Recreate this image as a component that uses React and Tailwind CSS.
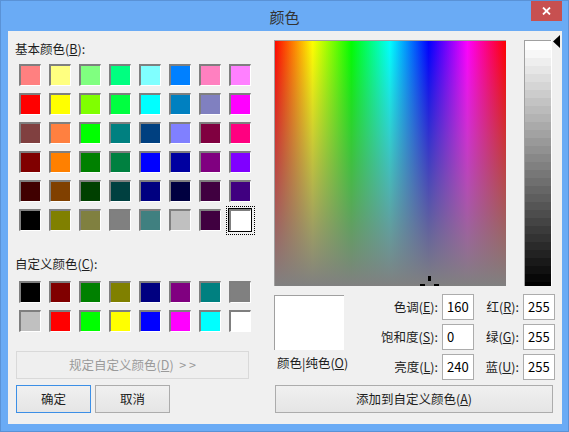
import React from "react"

const font = "font-['Noto_Sans_CJK_SC','Noto_Sans',sans-serif]"

const basicColors = [
  ["bg-[#ff8080]", "bg-[#ffff80]", "bg-[#80ff80]", "bg-[#00ff80]", "bg-[#80ffff]", "bg-[#0080ff]", "bg-[#ff80c0]", "bg-[#ff80ff]"],
  ["bg-[#ff0000]", "bg-[#ffff00]", "bg-[#80ff00]", "bg-[#00ff40]", "bg-[#00ffff]", "bg-[#0080c0]", "bg-[#8080c0]", "bg-[#ff00ff]"],
  ["bg-[#804040]", "bg-[#ff8040]", "bg-[#00ff00]", "bg-[#008080]", "bg-[#004080]", "bg-[#8080ff]", "bg-[#800040]", "bg-[#ff0080]"],
  ["bg-[#800000]", "bg-[#ff8000]", "bg-[#008000]", "bg-[#008040]", "bg-[#0000ff]", "bg-[#0000a0]", "bg-[#800080]", "bg-[#8000ff]"],
  ["bg-[#400000]", "bg-[#804000]", "bg-[#004000]", "bg-[#004040]", "bg-[#000080]", "bg-[#000040]", "bg-[#400040]", "bg-[#400080]"],
  ["bg-[#000000]", "bg-[#808000]", "bg-[#808040]", "bg-[#808080]", "bg-[#408080]", "bg-[#c0c0c0]", "bg-[#400040]", "bg-[#ffffff]"],
].flat()

const customColors = [
  "bg-[#000000]", "bg-[#800000]", "bg-[#008000]", "bg-[#808000]", "bg-[#000080]", "bg-[#800080]", "bg-[#008080]", "bg-[#808080]",
  "bg-[#c0c0c0]", "bg-[#ff0000]", "bg-[#00ff00]", "bg-[#ffff00]", "bg-[#0000ff]", "bg-[#ff00ff]", "bg-[#00ffff]", "bg-[#ffffff]",
]

// sunken little colour box
const Swatch = ({ color, selected }) => (
  <div className="relative w-[22px] h-[22px]">
    <div className={`w-full h-full border-t-2 border-l-2 border-r border-b border-t-[#7f7f7f] border-l-[#7f7f7f] border-r-white border-b-white ${color}`} />
    {selected && (
      <>
        <div className="absolute -inset-[1px] border border-black" />
        <div className="absolute -top-[3px] -left-[3px] -right-[4px] -bottom-[4px] border border-dotted border-black" />
      </>
    )}
  </div>
)

const Spectrum = () => (
  <svg width="232" height="246" className="block">
    <defs>
      <linearGradient id="hue" x1="0" y1="0" x2="1" y2="0">
        <stop offset="0" stopColor="#ff0000" />
        <stop offset="0.1667" stopColor="#ffff00" />
        <stop offset="0.3333" stopColor="#00ff00" />
        <stop offset="0.5" stopColor="#00ffff" />
        <stop offset="0.6667" stopColor="#0000ff" />
        <stop offset="0.8333" stopColor="#ff00ff" />
        <stop offset="1" stopColor="#ff0000" />
      </linearGradient>
      <linearGradient id="sat" x1="0" y1="0" x2="0" y2="1">
        <stop offset="0" stopColor="#808080" stopOpacity="0" />
        <stop offset="1" stopColor="#808080" stopOpacity="1" />
      </linearGradient>
    </defs>
    <rect x="0" y="0" width="232" height="246" fill="url(#hue)" />
    <rect x="0" y="0" width="232" height="246" fill="url(#sat)" />
    <rect x="0" y="0" width="232" height="1" fill="#a0a0a0" />
    <rect x="0" y="0" width="1" height="246" fill="#a0a0a0" />
    {/* crosshair */}
    <rect x="154" y="236" width="3" height="5" fill="#000" />
    <rect x="146" y="244" width="5" height="2" fill="#000" />
    <rect x="160" y="244" width="5" height="2" fill="#000" />
  </svg>
)

const steps = Array.from({ length: 31 }, (_, i) => Math.round(255 * (1 - i / 30)))

const LumBar = () => (
  <svg width="28" height="246" className="block">
    {steps.map((g, i) => (
      <rect key={i} x="0" y={2 + i * 8} width="28" height="8" fill={`rgb(${g},${g},${g})`} />
    ))}
    <rect x="0" y="0" width="28" height="2" fill="#ffffff" />
    <rect x="0" y="0" width="28" height="1" fill="#a0a0a0" />
    <rect x="0" y="0" width="1" height="246" fill="#a0a0a0" />
    <rect x="27" y="0" width="1" height="246" fill="#ffffff" />
  </svg>
)

const Field = ({ label, acc, value }) => (
  <>
    <div className="flex items-center justify-end text-[#1e1e1e] whitespace-nowrap">
      {label}(<u>{acc}</u>):
    </div>
    <div className="ml-[4px] h-[26px] border border-[#acacac] bg-white pl-[4px] pb-[1px] flex items-center text-[13px] text-black">
      {value}
    </div>
  </>
)

const Btn = ({ children, focus, className = "" }) => (
  <div
    className={`h-[28px] flex items-center justify-center border bg-linear-to-b from-[#f0f0f0] to-[#e5e5e5] text-[#1e1e1e] whitespace-nowrap ${
      focus ? "border-[#3c8fe6]" : "border-[#acacac]"
    } ${className}`}
  >
    {children}
  </div>
)

export default function App() {
  return (
    <div className={`w-[569px] h-[432px] bg-[#6aabf5] border border-[#5a92d6] flex flex-col text-[12.5px] leading-[16px] ${font}`}>
      {/* title bar */}
      <div className="relative h-[30px] flex items-center justify-center">
        <span className="text-[15px] text-[#333333] leading-none">颜色</span>
        <div className="absolute right-[6px] top-0 w-[31px] h-[20px] bg-[#c75050] flex items-center justify-center">
          <svg width="9" height="8" viewBox="0 0 9 8">
            <path d="M1 0.5 L8 7.5 M8 0.5 L1 7.5" stroke="#fff" strokeWidth="1.8" />
          </svg>
        </div>
      </div>

      {/* client */}
      <div className="ml-[7px] mr-[6px] h-[393px] bg-[#f0f0f0] flex">
        {/* left side */}
        <div className="ml-[8px] w-[250px] flex flex-col">
          <div className="mt-[10px] -ml-[1px] text-[#1e1e1e]">
            基本颜色(<u>B</u>):
          </div>
          <div className="mt-[7px] ml-[3px] grid grid-cols-[repeat(8,22px)] gap-x-[8px] gap-y-[7px]">
            {basicColors.map((c, i) => (
              <Swatch key={i} color={c} selected={i === 47} />
            ))}
          </div>
          <div className="mt-[25px] -ml-[1px] text-[#1e1e1e]">
            自定义颜色(<u>C</u>):
          </div>
          <div className="mt-[9px] ml-[3px] grid grid-cols-[repeat(8,22px)] gap-x-[8px] gap-y-[7px]">
            {customColors.map((c, i) => (
              <Swatch key={i} color={c} />
            ))}
          </div>
          <div className="mt-[19px] w-[233px] h-[28px] border border-[#d9d9d9] bg-[#efefef] flex items-center justify-center text-[#9a9a9a] whitespace-nowrap">
            规定自定义颜色(<u>D</u>)&nbsp;&nbsp;&gt;&nbsp;&gt;
          </div>
          <div className="mt-[6px] flex gap-[4px]">
            <Btn focus className="w-[75px]">确定</Btn>
            <Btn className="w-[75px]">取消</Btn>
          </div>
        </div>

        {/* right side */}
        <div className="ml-[8px] flex flex-col">
          <div className="mt-[4px] flex items-start">
            <div className="mt-[5px]">
              <Spectrum />
            </div>
            <div className="mt-[5px] ml-[18px]">
              <LumBar />
            </div>
            <svg width="8" height="13" className="ml-[1px] block">
              <path d="M0 6.5 L7 0 L7 13 Z" fill="#000" />
            </svg>
          </div>

          <div className="mt-[8px] flex">
            <div className="w-[70px] flex flex-col">
              <div className="mt-[1px] h-[55px] bg-white border-t border-l border-[#a0a0a0]" />
              <div className="mt-[5px] ml-[3px] text-[#1e1e1e] whitespace-nowrap">
                颜色|纯色(<u>O</u>)
              </div>
            </div>
            <div className="grid grid-cols-[94px_36px_45px_36px] grid-rows-[26px_26px_26px] gap-y-[4px]">
              <Field label="色调" acc="E" value="160" />
              <Field label="红" acc="R" value="255" />
              <Field label="饱和度" acc="S" value="0" />
              <Field label="绿" acc="G" value="255" />
              <Field label="亮度" acc="L" value="240" />
              <Field label="蓝" acc="U" value="255" />
            </div>
          </div>

          <Btn className="mt-[5px] ml-[1px] w-[278px]">
            添加到自定义颜色(<u>A</u>)
          </Btn>
        </div>
      </div>
    </div>
  )
}
